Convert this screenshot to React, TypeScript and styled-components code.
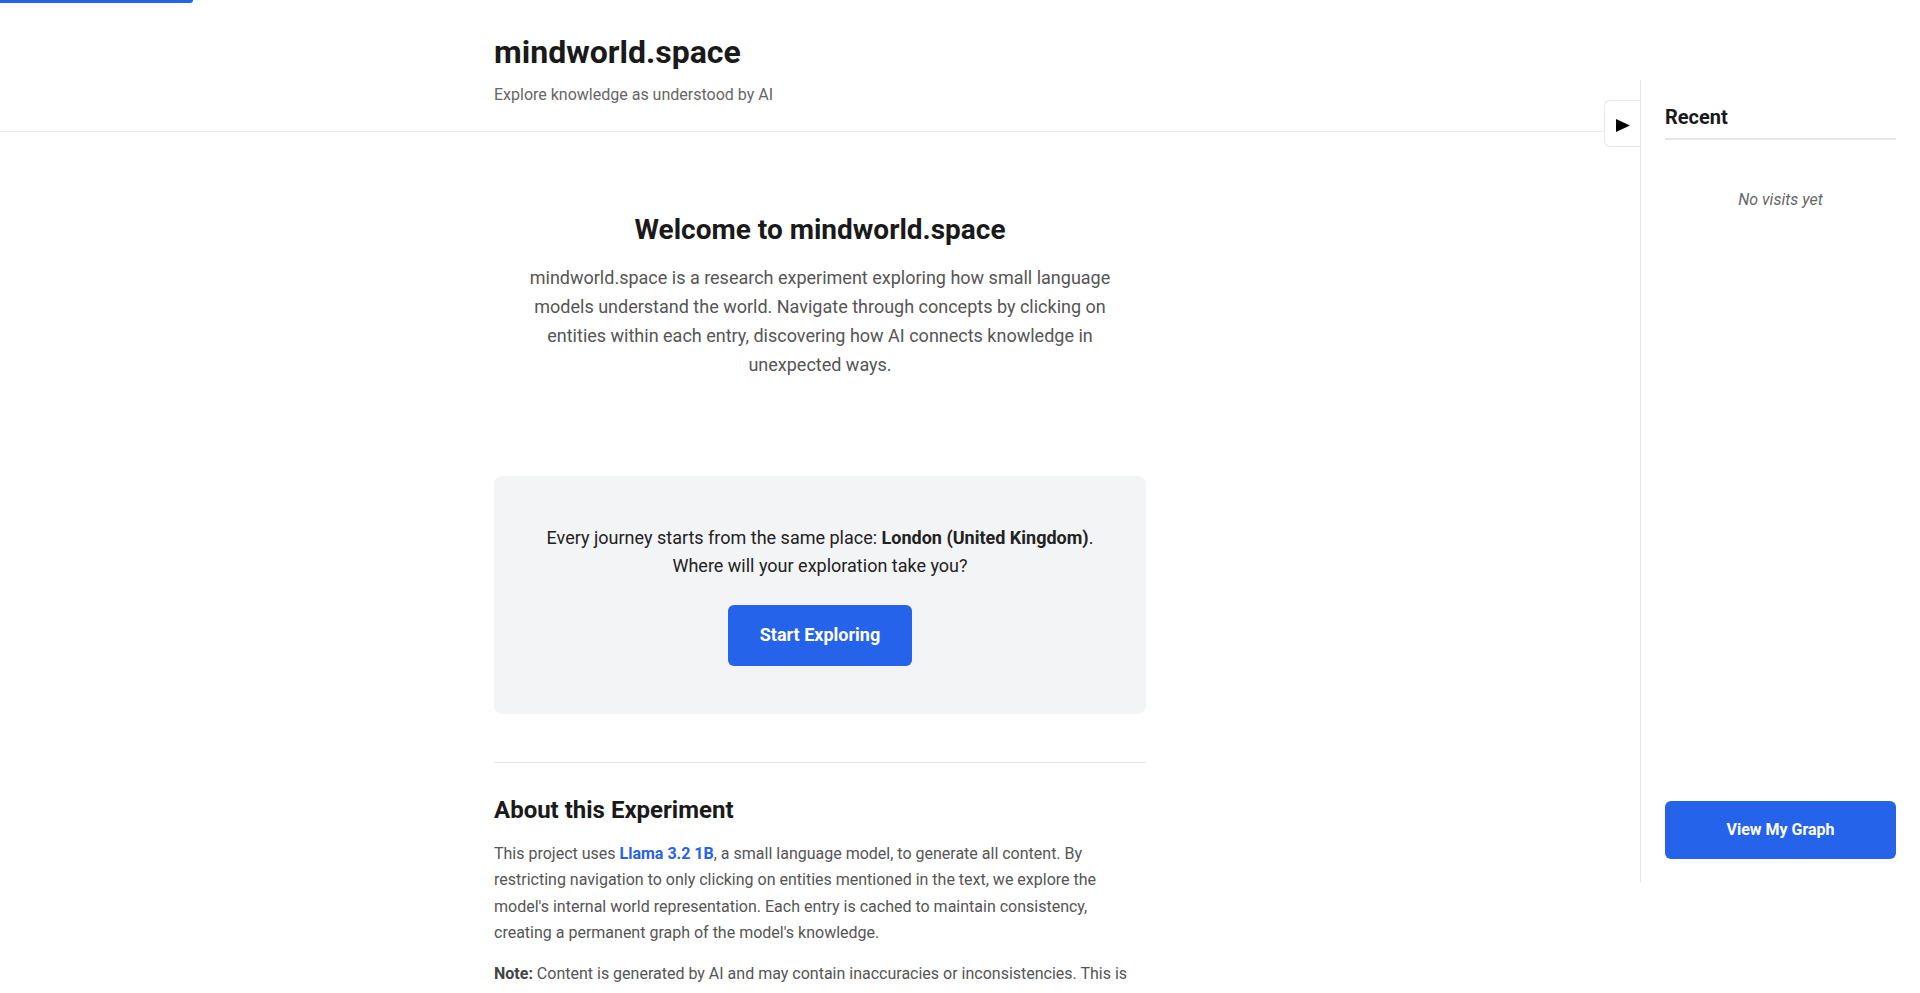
import React from "react";
import styled, { createGlobalStyle } from "styled-components";

const GlobalStyle = createGlobalStyle`
  html, body {
    margin: 0;
    padding: 0;
    background: #ffffff;
  }
  body {
    font-family: Roboto, "Liberation Sans", Arial, sans-serif;
    color: #1a1a1a;
    line-height: 1.6;
  }
  * { box-sizing: border-box; }
`;

const ProgressBar = styled.div`
  position: fixed;
  top: 0;
  left: 0;
  height: 3px;
  background: #2563eb;
  border-radius: 0 0 3px 0;
  z-index: 10;
`;

const Layout = styled.div`
  display: flex;
  align-items: flex-start;
  min-height: 100vh;
`;

const Main = styled.main`
  flex: 1;
  min-width: 0;
`;

const Header = styled.header`
  border-bottom: 1px solid #e5e7eb;
`;

const Container = styled.div`
  max-width: 700px;
  margin: 0 auto;
  padding: 0 24px;
`;

const HeaderInner = styled(Container)`
  padding-top: 32px;
  padding-bottom: 24px;
`;

const SiteTitle = styled.h1`
  margin: 0 0 11px;
  font-size: 32px;
  line-height: 1.25;
  font-weight: 700;
  color: #1a1a1a;
`;

const Tagline = styled.p`
  margin: 0;
  font-size: 16px;
  line-height: 1.5;
  color: #666666;
`;

const Content = styled(Container)`
  padding-top: 80px;
  padding-bottom: 48px;
`;

const Welcome = styled.section`
  text-align: center;
  margin-bottom: 96px;
`;

const WelcomeTitle = styled.h2`
  margin: 0 0 16px;
  font-size: 28px;
  line-height: 1.3;
  font-weight: 700;
  color: #1a1a1a;
`;

const Lead = styled.p`
  max-width: 600px;
  margin: 0 auto;
  font-size: 18px;
  line-height: 1.6;
  color: #555555;
`;

const StartCard = styled.div`
  background: #f3f4f6;
  border-radius: 8px;
  padding: 48px;
  text-align: center;
  margin-bottom: 48px;
`;

const StartText = styled.p`
  margin: 0 0 24px;
  font-size: 18px;
  line-height: 1.6;
  color: #222222;

  strong {
    font-weight: 700;
  }
`;

const PrimaryButton = styled.button<{ $block?: boolean; $size?: number }>`
  display: ${(p) => (p.$block ? "block" : "inline-block")};
  width: ${(p) => (p.$block ? "100%" : "auto")};
  background: #2563eb;
  color: #ffffff;
  border: none;
  border-radius: 6px;
  font-family: inherit;
  font-weight: 700;
  font-size: ${(p) => p.$size ?? 16}px;
  line-height: 1.6;
  padding: 16px 32px;
  cursor: pointer;
`;

const About = styled.section`
  border-top: 1px solid #e5e7eb;
  padding-top: 33px;
`;

const AboutTitle = styled.h3`
  margin: 0 0 16px;
  font-size: 24px;
  line-height: 1.2;
  font-weight: 700;
  color: #1a1a1a;
`;

const AboutText = styled.p`
  margin: 0 0 15px;
  font-size: 16px;
  line-height: 1.65;
  color: #555555;

  strong {
    color: #444444;
    font-weight: 700;
  }
`;

const ModelLink = styled.a`
  color: #2563eb;
  font-weight: 700;
  text-decoration: none;
`;

const Sidebar = styled.aside`
  position: relative;
  flex: 0 0 280px;
  width: 280px;
  height: 803px;
  margin-top: 80px;
  border-left: 1px solid #e5e7eb;
  background: #ffffff;
  padding: 24px;
  display: flex;
  flex-direction: column;
`;

const ToggleButton = styled.button`
  position: absolute;
  top: 20px;
  left: -37px;
  width: 36px;
  height: 47px;
  padding: 4px 0 0;
  background: #ffffff;
  border: 1px solid #e5e7eb;
  border-right: none;
  border-radius: 6px 0 0 6px;
  display: flex;
  align-items: center;
  justify-content: center;
  cursor: pointer;
`;

const SidebarTitle = styled.h2`
  margin: 0 0 16px;
  padding-bottom: 8px;
  border-bottom: 2px solid #e5e7eb;
  font-size: 20px;
  line-height: 1.3;
  font-weight: 700;
  color: #1a1a1a;
`;

const EmptyNote = styled.p`
  margin: 0;
  padding: 32px 0;
  text-align: center;
  font-size: 16px;
  line-height: 1.5;
  font-style: italic;
  color: #666666;
`;

const SidebarFooter = styled.div`
  margin-top: auto;
`;

export default function App() {
  return (
    <>
      <GlobalStyle />
      <ProgressBar style={{ width: "193px" }} />
      <Layout>
        <Main>
          <Header>
            <HeaderInner>
              <SiteTitle>mindworld.space</SiteTitle>
              <Tagline>Explore knowledge as understood by AI</Tagline>
            </HeaderInner>
          </Header>
          <Content>
            <Welcome>
              <WelcomeTitle>Welcome to mindworld.space</WelcomeTitle>
              <Lead>
                mindworld.space is a research experiment exploring how small language
                models understand the world. Navigate through concepts by clicking on
                entities within each entry, discovering how AI connects knowledge in
                unexpected ways.
              </Lead>
            </Welcome>
            <StartCard>
              <StartText>
                Every journey starts from the same place: <strong>London (United Kingdom)</strong>.
                <br />
                Where will your exploration take you?
              </StartText>
              <PrimaryButton $size={18}>Start Exploring</PrimaryButton>
            </StartCard>
            <About>
              <AboutTitle>About this Experiment</AboutTitle>
              <AboutText>
                This project uses <ModelLink href="#">Llama 3.2 1B</ModelLink>, a small language
                model, to generate all content. By restricting navigation to only clicking on
                entities mentioned in the text, we explore the model's internal world
                representation. Each entry is cached to maintain consistency, creating a
                permanent graph of the model's knowledge.
              </AboutText>
              <AboutText>
                <strong>Note:</strong> Content is generated by AI and may contain inaccuracies
                or inconsistencies. This is best explored as a window into how a small model
                represents the world, not as a source of factual information.
              </AboutText>
            </About>
          </Content>
        </Main>
        <Sidebar>
          <ToggleButton aria-label="Toggle sidebar">
            <svg width="14" height="13" viewBox="0 0 14 13" aria-hidden="true">
              <polygon points="0,0 14,6.5 0,13" fill="#000000" />
            </svg>
          </ToggleButton>
          <SidebarTitle>Recent</SidebarTitle>
          <EmptyNote>No visits yet</EmptyNote>
          <SidebarFooter>
            <PrimaryButton $block>View My Graph</PrimaryButton>
          </SidebarFooter>
        </Sidebar>
      </Layout>
    </>
  );
}
